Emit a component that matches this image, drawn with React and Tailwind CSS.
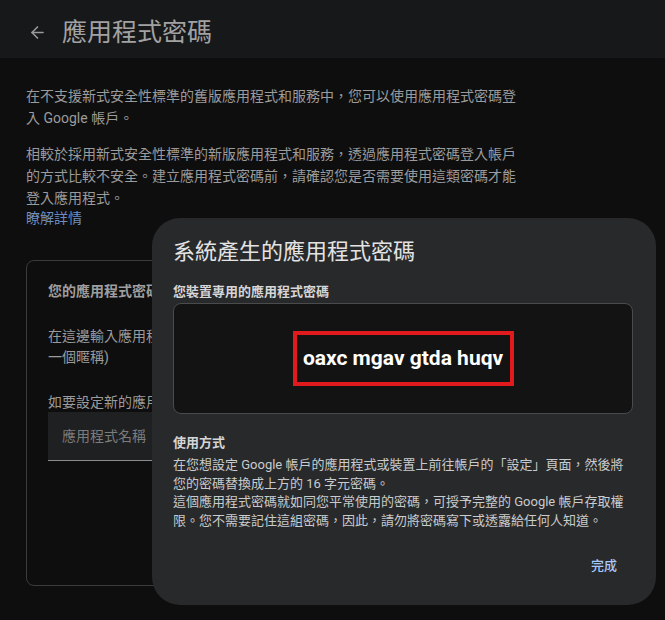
import { ArrowLeft } from 'lucide-react';

const font = { fontFamily: '"Roboto", "Noto Sans CJK TC", sans-serif' };

function PasswordDialog() {
  return (
    <div className="absolute left-[152px] top-[218px] w-[504px] h-[387px] rounded-[28px] bg-[#28292b] pl-[21px] pr-[23px] pt-[19px] flex flex-col">
      <h2 className="text-[22px] leading-[30px] text-[#e3e3e3]">系統產生的應用程式密碼</h2>
      <div className="mt-[17px] text-[13px] leading-[16px] font-bold text-[#d6d6d6]">您裝置專用的應用程式密碼</div>
      <div className="mt-[3px] h-[111px] rounded-[8px] border border-[#4a4b4d] bg-[#131314] flex items-center justify-center">
        <div className="w-[221px] h-[55px] border-[4px] border-[#e11b1d] flex items-center justify-center">
          <span className="text-[21px] font-bold text-white">oaxc mgav gtda huqv</span>
        </div>
      </div>
      <div className="mt-[20px] text-[13px] leading-[18px] font-bold text-[#d6d6d6]">使用方式</div>
      <p className="mt-[4px] text-[13px] leading-[18.5px] text-[#c9cbcc]">
        在您想設定 Google 帳戶的應用程式或裝置上前往帳戶的「設定」頁面，然後將您的密碼替換成上方的 16 字元密碼。
        <br />
        這個應用程式密碼就如同您平常使用的密碼，可授予完整的 Google 帳戶存取權限。您不需要記住這組密碼，因此，請勿將密碼寫下或透露給任何人知道。
      </p>
      <div className="mt-auto mb-[30px] flex justify-end pr-[16px]">
        <button className="text-[13px] font-medium text-[#a8c7fa]">完成</button>
      </div>
    </div>
  );
}

export default function App() {
  return (
    <div className="relative w-[665px] h-[620px] overflow-hidden bg-[#0e0e0f]" style={font}>
      <header className="h-[58px] bg-[#17181a] flex items-center pt-[7px]">
        <ArrowLeft className="ml-[28px] w-[19px] h-[19px] text-[#9a9a9a]" strokeWidth={2} />
        <h1 className="ml-[15px] text-[25px] leading-[30px] text-[#a2a2a2]">應用程式密碼</h1>
      </header>

      <main className="px-[26px] pt-[27px] text-[14px] text-[#9b9b9b]">
        <p className="leading-[22px] w-[500px]">
          在不支援新式安全性標準的舊版應用程式和服務中，您可以使用應用程式密碼登入 Google 帳戶。
        </p>
        <p className="mt-[14px] leading-[22px] w-[500px]">
          相較於採用新式安全性標準的新版應用程式和服務，透過應用程式密碼登入帳戶的方式比較不安全。建立應用程式密碼前，請確認您是否需要使用這類密碼才能登入應用程式。
        </p>
        <a className="block leading-[18px] text-[#6d8dc0]">瞭解詳情</a>

        <section className="mt-[33px] w-[613px] h-[326px] rounded-[8px] border border-[#3a3b3d] px-[21px] pt-[20px]">
          <div className="text-[14px] leading-[20px] font-bold text-[#9e9e9e]">您的應用程式密碼</div>
          <p className="mt-[25px] text-[14px] leading-[21px]">
            在這邊輸入應用程式名稱，即可建立專屬密碼 (名稱可自由設定，例如取
            <br />
            一個暱稱)
          </p>
          <div className="mt-[24px] text-[14px] leading-[20px]">如要設定新的應用程式密碼，請輸入名稱</div>
          <div className="h-[49px] bg-[#1f2022] border-b border-[#8a8a8a] flex items-center px-[14px]">
            <span className="text-[14px] text-[#7c7c7c]">應用程式名稱</span>
          </div>
        </section>
      </main>

      <PasswordDialog />
    </div>
  );
}
